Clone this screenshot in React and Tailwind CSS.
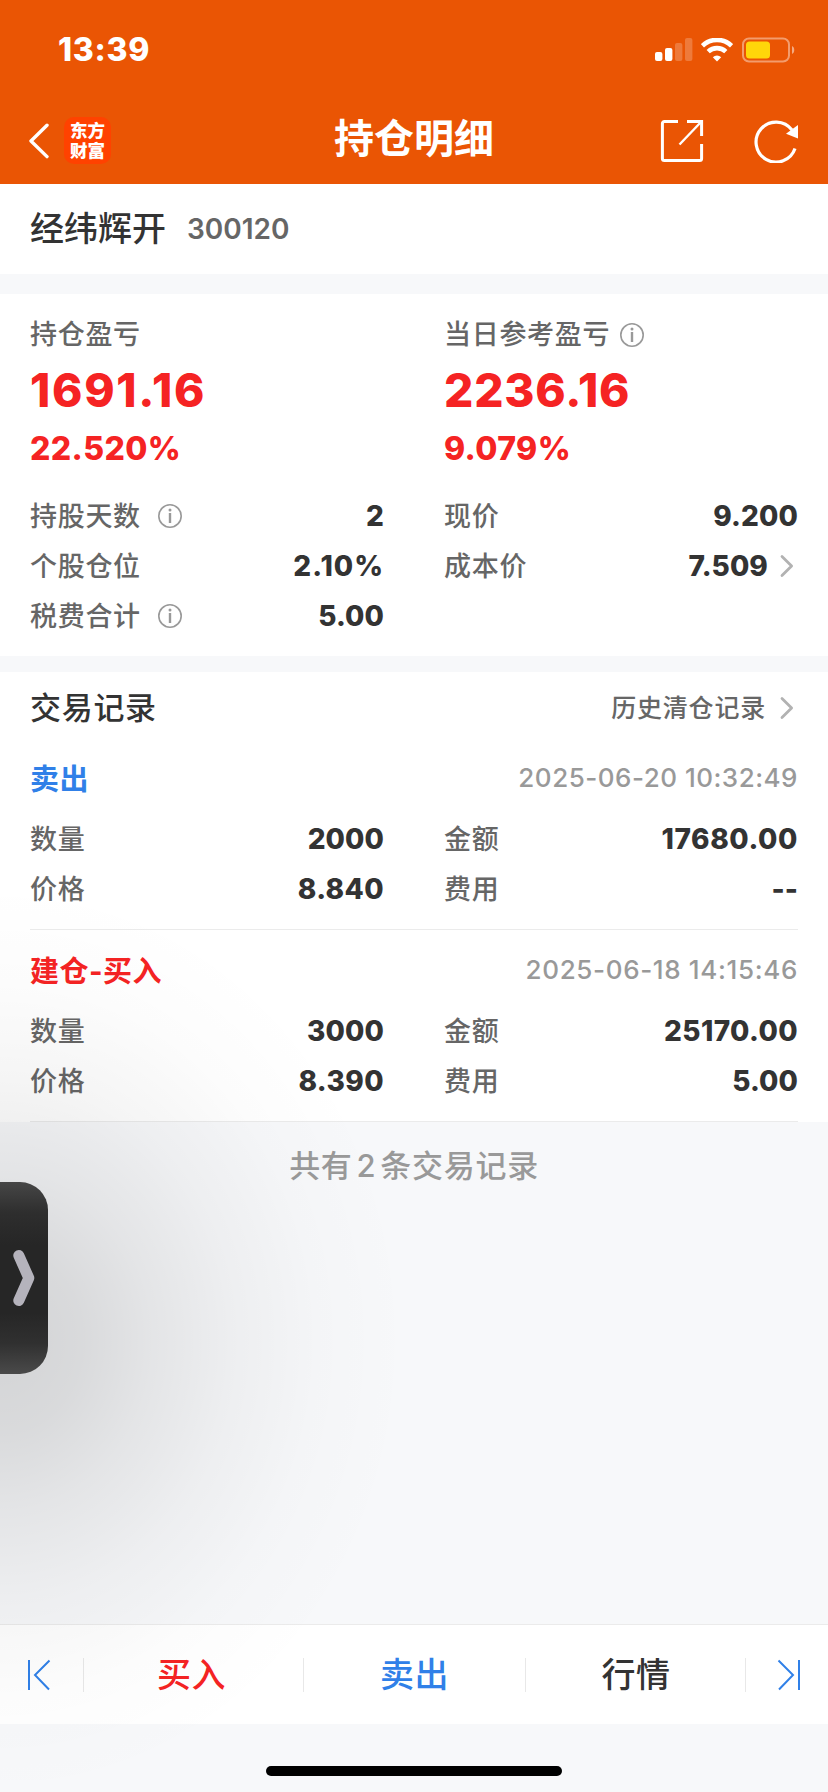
import React from "react";

const CJK = "font-['Inter','Noto_Sans_CJK_SC',sans-serif]";

function InfoIcon({ className }) {
  return (
    <svg className={"h-6 w-6 shrink-0 " + className} viewBox="0 0 24 24" fill="none">
      <circle cx="12" cy="12" r="11.2" stroke="#999" strokeWidth="1.6" />
      <circle cx="12" cy="6" r="1.5" fill="#999" />
      <path d="M12 9v10" stroke="#999" strokeWidth="2.4" />
    </svg>
  );
}

function Chevron() {
  return (
    <svg className="mr-1 h-6 w-4 shrink-0" viewBox="0 0 16 24" fill="none">
      <path d="M4 2.5l9.6 9.5L4 21.5" stroke="#b2b2b2" strokeWidth="2.8" strokeLinecap="round" strokeLinejoin="round" />
    </svg>
  );
}

function StatusBar() {
  return (
    <div className="flex h-[98px] items-center justify-between pl-[58px] pr-[33px] pt-[2px]">
      <span className="text-[32px] font-extrabold leading-none tracking-[0.7px] text-white">13:39</span>
      <div className="flex items-center">
        <svg className="h-[24px] w-[38px]" viewBox="0 0 38 24" fill="#fff">
          <rect x="0" y="14" width="7.4" height="9" rx="2" />
          <rect x="10" y="10" width="7.4" height="13" rx="2" />
          <rect x="20" y="5" width="7.4" height="18" rx="2" opacity=".22" />
          <rect x="30" y="0" width="7.4" height="23" rx="2" opacity=".22" />
        </svg>
        <svg className="ml-2 h-[24px] w-[32px]" viewBox="0 0 32 24" fill="none" stroke="#fff">
          <path d="M1.4 7.8A21 21 0 0 1 30.6 7.8" strokeWidth="4.6" />
          <path d="M7.2 13.6A12.8 12.8 0 0 1 24.8 13.6" strokeWidth="4.6" />
          <path d="M16 23.4l-4.2-4.2a6.2 6.2 0 0 1 8.4 0z" fill="#fff" stroke="none" />
        </svg>
        <svg className="ml-2 h-[26px] w-[54px]" viewBox="0 0 54 26" fill="none">
          <rect x="2" y="1.5" width="46" height="23" rx="6" stroke="#fff" strokeOpacity=".42" strokeWidth="2" />
          <rect x="5" y="4.5" width="24" height="17" rx="3.5" fill="#ffd60a" />
          <path d="M51 9v8c3-1.2 3-6.8 0-8z" fill="#fff" fillOpacity=".5" />
        </svg>
      </div>
    </div>
  );
}

function NavBar() {
  return (
    <div className="grid h-[86px] grid-cols-3 items-center pb-[1px] pl-7 pr-[30px]">
      <div className="flex items-center">
        <svg className="h-[36px] w-[22px]" viewBox="0 0 22 36" fill="none">
          <path d="M19 2.2L3 18l16 15.6" stroke="#fff" strokeWidth="3.4" strokeLinecap="round" strokeLinejoin="round" />
        </svg>
        <div className="ml-3.5 flex h-[47px] w-[47px] items-center justify-center rounded-[10px] bg-[#ff4200] font-['Liberation_Sans','Noto_Sans_CJK_SC',sans-serif] text-[17.5px] font-black leading-[20px] text-white">
          <p>东方<br />财富</p>
        </div>
      </div>
      <h1 className="pb-[4px] pl-[2px] text-center text-[40px] font-bold leading-none text-white">持仓明细</h1>
      <div className="flex items-center justify-end">
        <svg className="h-[44px] w-[44px]" viewBox="0 0 44 44" fill="none" stroke="#fff" strokeWidth="3">
          <path d="M18 2.4H4.4a2 2 0 0 0-2 2v35.2a2 2 0 0 0 2 2h35.2a2 2 0 0 0 2-2V25" />
          <path d="M27 2.4h14.6V17" />
          <path d="M41 3L19.5 25.5" strokeWidth="2.4" />
        </svg>
        <svg className="ml-[50px] h-[44px] w-[44px]" viewBox="0 0 44 44" fill="none">
          <path d="M41 29.5A20 20 0 1 1 38 11" stroke="#fff" strokeWidth="3.2" />
          <path d="M44 6v13.4l-12-4.6z" fill="#fff" />
        </svg>
      </div>
    </div>
  );
}

function Field({ label, value, info, chevron, spacing = "tracking-[0.1px]" }) {
  return (
    <div className="flex h-[50px] items-center">
      <span className="text-[27px] font-medium leading-none tracking-[0.7px] text-[#666]">{label}</span>
      {info && <InfoIcon className="ml-[17px]" />}
      <span className={"ml-auto text-[28px] font-extrabold leading-none text-[#333] " + spacing}>{value}</span>
      {chevron && <div className="ml-2.5 flex"><Chevron /></div>}
    </div>
  );
}

function Profit({ label, amount, rate, info, spacing }) {
  return (
    <div className="flex flex-col">
      <div className="flex h-[41px] items-center">
        <span className="text-[27px] font-medium leading-none tracking-[0.7px] text-[#666]">{label}</span>
        {info && <InfoIcon className="ml-[10px]" />}
      </div>
      <div className={"flex h-[69px] items-center text-[46px] font-extrabold leading-none text-[#f52323] " + spacing}>{amount}</div>
      <div className="flex h-[46px] items-center pt-[3px] text-[32px] font-extrabold leading-none tracking-[0.4px] text-[#f52323]">{rate}</div>
    </div>
  );
}

function Trade({ type, tone, time, spacing, rows }) {
  return (
    <section className="mx-[30px] h-[192px] border-b border-[#ebebeb]">
      <div className="flex h-[76px] items-center justify-between pt-[7px]">
        <span className={"text-[29px] font-bold leading-none tracking-[0.5px] " + tone}>{type}</span>
        <time className={"pb-[3px] text-[26px] font-medium leading-none text-[#999] " + spacing}>{time}</time>
      </div>
      <div className="grid grid-cols-2 gap-x-[60px]">
        {rows.map(([label, value, spacing]) => <Field key={label} label={label} value={value} spacing={spacing} />)}
      </div>
    </section>
  );
}

export default function App() {
  return (
    <div className={"relative flex h-[1792px] w-[828px] flex-col overflow-hidden whitespace-nowrap bg-[#f7f8fa] " + CJK}>
      <header className="h-[184px] bg-[#ea5504]">
        <StatusBar />
        <NavBar />
      </header>

      <section className="flex h-[90px] items-center bg-white px-[30px]">
        <span className="text-[34px] font-medium leading-none text-[#333]">经纬辉开</span>
        <span className="ml-[21px] text-[28px] font-semibold leading-none text-[#666]">300120</span>
      </section>

      <section className="mt-5 h-[362px] bg-white px-[30px] pt-5">
        <div className="grid grid-cols-2 gap-x-[60px]">
          <Profit label="持仓盈亏" amount="1691.16" rate="22.520%" spacing="tracking-[1.7px]" />
          <Profit label="当日参考盈亏" amount="2236.16" rate="9.079%" spacing="tracking-[0.8px]" info />
        </div>
        <div className="mt-[21px] grid grid-cols-2 gap-x-[60px]">
          <Field label="持股天数" value="2" info />
          <Field label="现价" value="9.200" />
          <Field label="个股仓位" value="2.10%" spacing="tracking-[1px]" />
          <Field label="成本价" value="7.509" chevron />
          <Field label="税费合计" value="5.00" info />
        </div>
      </section>

      <section className="mt-4 h-[450px] bg-white">
        <div className="flex h-[66px] items-center px-[30px] pt-[6px]">
          <h2 className="pb-[2px] text-[31px] font-medium leading-none tracking-[0.7px] text-[#333]">交易记录</h2>
          <span className="ml-auto mr-3 text-[25px] font-medium leading-none tracking-[0.8px] text-[#666]">历史清仓记录</span>
          <Chevron />
        </div>
        <Trade
          type="卖出"
          tone="text-[#3080e8]"
          time="2025-06-20 10:32:49"
          spacing="tracking-[0.5px]"
          rows={[["数量", "2000"], ["金额", "17680.00", "tracking-[0.6px]"], ["价格", "8.840", "tracking-[0.4px]"], ["费用", "--"]]}
        />
        <Trade
          type="建仓-买入"
          tone="text-[#f52323]"
          time="2025-06-18 14:15:46"
          spacing="tracking-[0.65px]"
          rows={[["数量", "3000"], ["金额", "25170.00", "tracking-[0.4px]"], ["价格", "8.390", "tracking-[0.4px]"], ["费用", "5.00"]]}
        />
      </section>

      <main className="flex h-[502px] justify-center pt-7">
        <p className="h-8 text-[31px] font-medium leading-8 tracking-[0.7px] text-[#999]">
          共有<span className="mx-[4px]">2</span>条交易记录
        </p>
      </main>

      <nav className="flex h-[100px] items-center border-t border-[#ebebeb] bg-white text-[34px] font-medium leading-none tracking-[0.6px]">
        <div className="flex w-[83px] justify-start pl-7">
          <svg className="h-[32px] w-[24px]" viewBox="0 0 24 32" fill="none" stroke="#3080e8" strokeWidth="2">
            <path d="M1 1v30M21.5 1.5L7 16l14 14.5" />
          </svg>
        </div>
        <div className="flex h-[34px] w-[220px] items-center justify-center border-l border-[#e8e8e8] pr-1 text-[#f52323]">买入</div>
        <div className="flex h-[34px] w-[222px] items-center justify-center border-l border-[#e8e8e8] text-[#3080e8]">卖出</div>
        <div className="flex h-[34px] flex-1 items-center justify-center border-x border-[#e8e8e8] pl-px text-[#333]">行情</div>
        <div className="flex w-[82px] justify-end pr-7">
          <svg className="h-[32px] w-[24px]" viewBox="0 0 24 32" fill="none" stroke="#3080e8" strokeWidth="2">
            <path d="M23 1v30M2.5 1.5L17 16L3 30.5" />
          </svg>
        </div>
      </nav>
      <footer className="flex h-[68px] justify-center pt-[42px]">
        <div className="h-[10px] w-[296px] rounded-full bg-black" />
      </footer>

      <div className="pointer-events-none absolute left-0 top-[820px] h-[960px] w-[440px] bg-[radial-gradient(ellipse_410px_460px_at_0px_520px,rgba(0,0,0,0.15),rgba(0,0,0,0.12)_20%,rgba(0,0,0,0.08)_37%,rgba(0,0,0,0.038)_57%,rgba(0,0,0,0.012)_78%,transparent)]" />
      <div className="absolute left-0 top-[1182px] flex h-[192px] w-[48px] items-center rounded-r-[28px] bg-[linear-gradient(to_bottom,#464646,#2e2e2e_16%,#262626_33%,#262626_68%,#303030_84%,#4a4a4a)]">
        <svg className="ml-3 h-[58px] w-[24px]" viewBox="0 0 24 58" fill="none">
          <path d="M6.8 6.5L16.8 29L6.8 51.5" stroke="#b5b3bc" strokeWidth="11" strokeLinecap="round" strokeLinejoin="round" />
        </svg>
      </div>
    </div>
  );
}
